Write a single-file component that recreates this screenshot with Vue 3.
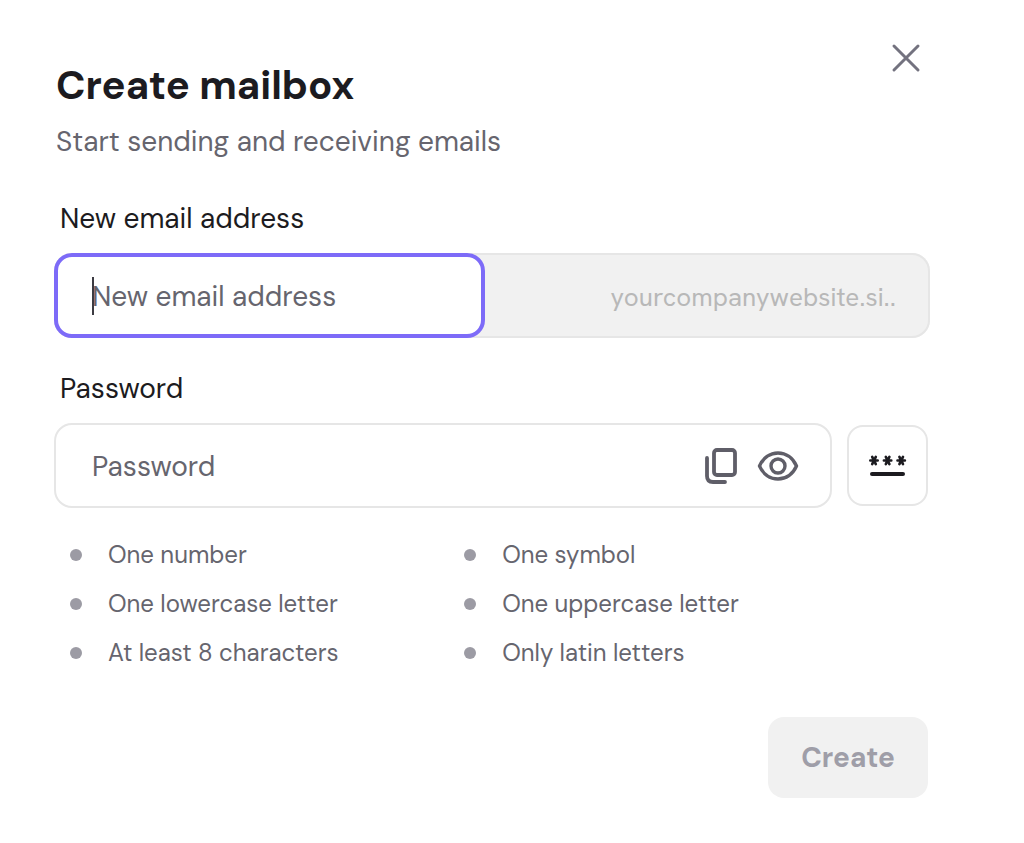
<script setup>
import { ref } from 'vue'

const email = ref('')
const password = ref('')
const visible = ref(false)
const rules = [
  'One number',
  'One symbol',
  'One lowercase letter',
  'One uppercase letter',
  'At least 8 characters',
  'Only latin letters',
]
</script>

<template>
  <main class="dialog" role="dialog" aria-labelledby="dialog-title">
    <header class="head">
      <div class="heading">
        <h1 id="dialog-title">Create mailbox</h1>
        <p>Start sending and receiving emails</p>
      </div>
      <button class="close" type="button" aria-label="Close">
        <svg width="30" height="30" viewBox="0 0 30 30" fill="none" stroke="#73727f" stroke-width="3" stroke-linecap="round">
          <path d="M3 3 27 27M27 3 3 27" />
        </svg>
      </button>
    </header>

    <form @submit.prevent>
      <label class="label" for="email">New email address</label>
      <div class="address">
        <div class="local">
          <input id="email" v-model="email" type="text" placeholder="New email address" autocomplete="off" />
          <span v-if="!email" class="caret"></span>
        </div>
        <span class="domain">yourcompanywebsite.si..</span>
      </div>

      <label class="label" for="password">Password</label>
      <div class="password-row">
        <div class="password">
          <input id="password" v-model="password" :type="visible ? 'text' : 'password'" placeholder="Password" autocomplete="off" />
          <button type="button" aria-label="Copy password">
            <svg width="34" height="38" viewBox="0 0 34 38" fill="none" stroke="#5f5e68" stroke-width="3.8" stroke-linecap="round" stroke-linejoin="round">
              <rect x="10" y="3" width="21" height="25" rx="3" />
              <path d="M3 11v18q0 6 6 6h12" />
            </svg>
          </button>
          <button type="button" aria-label="Show password" @click="visible = !visible">
            <svg width="42" height="30" viewBox="0 0 42 30" fill="none" stroke="#5f5e68" stroke-width="3.4" stroke-linejoin="round">
              <path d="M2.500 15C6 7 13 2 21 2s15 5 18.500 13C36 23 29 28 21 28S6 23 2.500 15Z" />
              <circle cx="21" cy="15" r="7" />
            </svg>
          </button>
        </div>
        <button class="generate" type="button" aria-label="Generate password">
          <svg width="38" height="24" viewBox="0 0 38 24" fill="none" stroke="#1c1b20" stroke-linecap="round">
            <g stroke-width="2.600">
              <path d="M1.300 6.500h7.400M3.200 2.900l3.600 7.200M6.800 2.900 3.200 10.100" />
              <path d="M14.900 6.500h7.400M16.800 2.900l3.600 7.200M20.400 2.900l-3.600 7.200" />
              <path d="M28.500 6.500h7.400M30.400 2.900l3.600 7.200M34 2.900l-3.600 7.200" />
            </g>
            <path d="M3 20h31" stroke-width="4" />
          </svg>
        </button>
      </div>

      <ul class="rules">
        <li v-for="rule in rules" :key="rule">{{ rule }}</li>
      </ul>

      <div class="actions">
        <button class="create" type="submit" disabled>Create</button>
      </div>
    </form>
  </main>
</template>

<style>
body {
  margin: 0;
  background: #fff;
}
</style>

<style scoped>
* {
  box-sizing: border-box;
}
.dialog {
  padding: 40px 94px 44px 54px;
  color: #1c1b20;
  font-family: "DM Sans", Inter, "Liberation Sans", sans-serif;
  font-size: 28px;
  line-height: 36px;
}
button {
  padding: 0;
  border: 0;
  background: none;
  font: inherit;
  display: flex;
  align-items: center;
  justify-content: center;
}
.head {
  display: flex;
  justify-content: space-between;
  align-items: flex-start;
}
.heading {
  padding: 20px 0 0 2px;
}
h1 {
  margin: 0;
  font-size: 40px;
  line-height: 50px;
  font-weight: 700;
}
p {
  margin: 14px 0 0;
  color: #66656e;
}
.close {
  width: 36px;
  height: 36px;
  margin-right: 6px;
}
form {
  padding-top: 41px;
}
.label {
  display: block;
  padding-left: 6px;
  margin-bottom: 16px;
}
input {
  flex: 1;
  min-width: 0;
  width: 100%;
  height: 100%;
  padding: 2px 0 0;
  border: 0;
  outline: 0;
  background: none;
  color: inherit;
  font: inherit;
}
input::placeholder {
  color: #66656e;
  opacity: 1;
}
.address {
  display: flex;
  height: 85px;
  margin-bottom: 33px;
  border-radius: 18px;
  background: #f1f1f1;
  box-shadow: inset 0 0 0 2px #e6e6e6;
}
.local {
  position: relative;
  flex: 0 0 431px;
  padding: 0 34px;
  border: 4px solid #7d6bf8;
  border-radius: 18px;
  background: #fff;
}
.caret {
  position: absolute;
  left: 34px;
  top: 20px;
  width: 2px;
  height: 38px;
  background: #3c3b42;
}
.domain {
  flex: 1;
  align-self: center;
  padding: 2px 34px 0 0;
  text-align: right;
  color: #b8b8b8;
  font-family: "Hanken Grotesk", "Noto Sans", sans-serif;
  font-size: 26px;
}
.password-row {
  display: flex;
  align-items: center;
  gap: 15px;
  padding-right: 2px;
}
.password {
  flex: 1;
  display: flex;
  align-items: center;
  gap: 19px;
  height: 85px;
  padding: 0 31px 0 36px;
  border: 2px solid #e6e6e6;
  border-radius: 18px;
}
.generate {
  width: 81px;
  height: 81px;
  border: 2px solid #e6e6e6;
  border-radius: 16px;
}
.rules {
  display: grid;
  grid-template-columns: 45% 45%;
  row-gap: 13px;
  margin: 29px 0 0;
  padding: 0;
  list-style: none;
  font-size: 24px;
  color: #66656e;
}
.rules li {
  display: flex;
  align-items: center;
  gap: 26px;
  padding-left: 16px;
}
.rules li::before {
  content: "";
  width: 12px;
  height: 12px;
  border-radius: 50%;
  background: #9c9ba4;
}
.actions {
  display: flex;
  justify-content: flex-end;
  padding: 46px 2px 0 0;
}
.create {
  width: 160px;
  height: 81px;
  border-radius: 16px;
  background: #f1f1f1;
  color: #9f9ea8;
  font-weight: 700;
}
</style>
